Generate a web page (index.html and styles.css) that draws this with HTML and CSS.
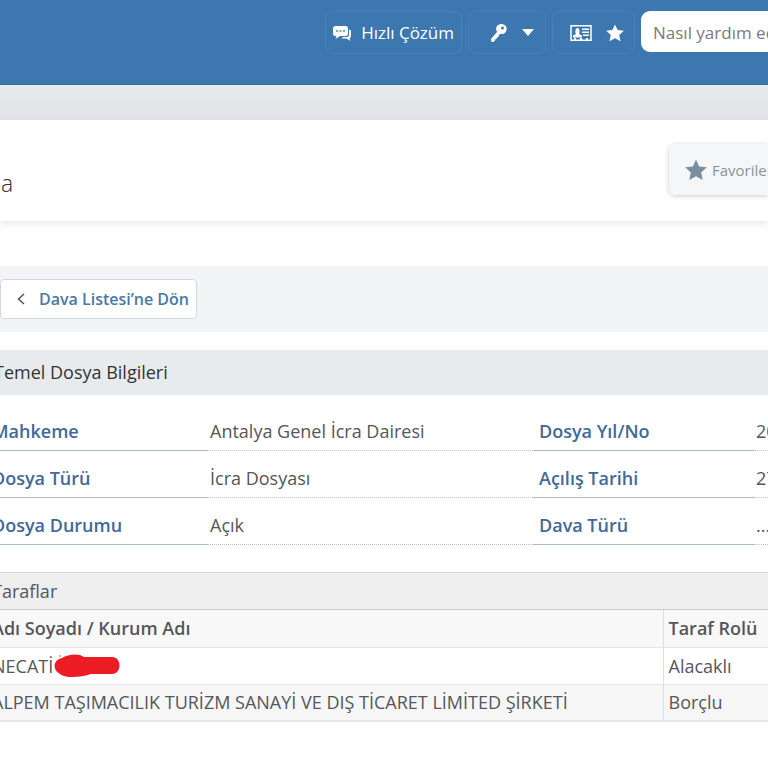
FILE: index.html
```
<!DOCTYPE html>
<html lang="tr">
<head>
    <meta charset="UTF-8">
    <meta name="viewport" content="width=device-width, initial-scale=1.0">
    <title>Dava Dosyası Sorgulama</title>
    <link rel="stylesheet" href="styles.css">
</head>
<body>
    <header class="topbar">
        <button type="button" class="top-button">
            <svg width="18" height="18" viewBox="0 0 18 18" aria-hidden="true">
                <path fill="currentColor" d="M2.500 2h10A2.500 2.500 0 0 1 15 4.500v5a2.500 2.500 0 0 1-2.500 2.500H7l-4.500 3 1-3H2.500A2.500 2.500 0 0 1 0 9.500v-5A2.500 2.500 0 0 1 2.500 2z"/>
                <path fill="currentColor" d="M16 5.500a2 2 0 0 1 2 2v4.500a2 2 0 0 1-1.500 2l1 3-4-2.500H8.500L10 13h3.500a2.500 2.500 0 0 0 2.500-2.500z"/>
                <path fill="#7fa6cc" d="M3 6h2v2H3zM6.500 6h2v2h-2zM10 6h2v2h-2z"/>
            </svg>
            <span>Hızlı Çözüm</span>
        </button>
        <button type="button" class="top-button top-key" aria-label="Şifre işlemleri">
            <svg width="18" height="20" viewBox="0 0 18 20" aria-hidden="true">
                <path fill="currentColor" fill-rule="evenodd" d="M11.500 1a5 5 0 1 1-1.200 9.800L8.500 12.500l.5 1-1.500.5-.5 1.500-1.500.5-.5 1.500L3.500 19 1 18.500V16l6-7A5 5 0 0 1 11.500 1zM12.500 3.500a1.500 1.500 0 1 0 0 3 1.500 1.500 0 0 0 0-3z"/>
            </svg>
            <svg width="12" height="8" viewBox="0 0 12 8" aria-hidden="true">
                <path fill="currentColor" d="M0 0h12L6 7z"/>
            </svg>
        </button>
        <div class="top-group">
            <button type="button" class="icon-button" aria-label="Kişisel bilgiler">
                <svg width="22" height="18" viewBox="0 0 22 18" aria-hidden="true">
                    <path fill="none" stroke="currentColor" stroke-width="1.500" d="M1 1.750h20v14.500H1z"/>
                    <path fill="currentColor" d="M3 13.500v-2l3-1.500C5 9 5 4 7.500 4S10 9 9 10l3 1.500v2zM12 4.500h7v1.500h-7zM12 7.500h7V9h-7zM13 10.500h6V12h-6zM4 14h2v2H4zM10 14h2v2h-2zM16 14h2v2h-2z"/>
                </svg>
            </button>
            <button type="button" class="icon-button" aria-label="Favoriler">
                <svg width="18" height="18" viewBox="0 0 20 20" aria-hidden="true">
                    <path fill="currentColor" d="M10 .5l2.900 6.300 6.900.8-5.100 4.700 1.400 6.800L10 15.700l-6.100 3.400 1.400-6.800L.2 7.600l6.900-.8z"/>
                </svg>
            </button>
        </div>
        <input type="text" class="search" aria-label="Arama" placeholder="Nasıl yardım edebilirim?">
    </header>
    <div class="strip"></div>

    <section class="page-head">
        <h1>a</h1>
        <button type="button" class="favorite">
            <svg width="22" height="22" viewBox="0 0 20 20" aria-hidden="true">
                <path fill="currentColor" d="M10 .5l2.900 6.300 6.900.8-5.100 4.700 1.400 6.800L10 15.700l-6.100 3.400 1.400-6.800L.2 7.600l6.900-.8z"/>
            </svg>
            <span>Favorilerime Ekle</span>
        </button>
    </section>

    <main>
        <div class="toolbar">
            <a href="#" class="back">
                <svg width="8" height="12" viewBox="0 0 8 12" aria-hidden="true">
                    <path fill="none" stroke="#4b5560" stroke-width="1.500" d="M7 1L1.500 6 7 11"/>
                </svg>
                <span>Dava Listesi’ne Dön</span>
            </a>
        </div>

        <h2 class="section-title">Temel Dosya Bilgileri</h2>
        <dl class="details">
            <dt>Mahkeme</dt>
            <dd>Antalya Genel İcra Dairesi</dd>
            <dt>Dosya Yıl/No</dt>
            <dd>20</dd>
            <dt>Dosya Türü</dt>
            <dd>İcra Dosyası</dd>
            <dt>Açılış Tarihi</dt>
            <dd>27</dd>
            <dt>Dosya Durumu</dt>
            <dd>Açık</dd>
            <dt>Dava Türü</dt>
            <dd>...</dd>
        </dl>

        <table class="parties">
            <caption>Taraflar</caption>
            <thead>
                <tr>
                    <th scope="col">Adı Soyadı / Kurum Adı</th>
                    <th scope="col" class="role">Taraf Rolü</th>
                </tr>
            </thead>
            <tbody>
                <tr>
                    <td>
                        <div class="person">
                            <span>NECATİ</span>
                            <svg width="66" height="24" viewBox="0 0 66 24" aria-hidden="true">
                                <path stroke="#77777a" d="M6 1v2"/>
                                <path fill="#ec1c24" d="M8 4C14 0 25-1 30 3h28c10 0 10 17 0 17H37c-9 3-25 5-31 0-8-4-7-14 2-16z"/>
                            </svg>
                        </div>
                    </td>
                    <td>Alacaklı</td>
                </tr>
                <tr>
                    <td>ALPEM TAŞIMACILIK TURİZM SANAYİ VE DIŞ TİCARET LİMİTED ŞİRKETİ</td>
                    <td>Borçlu</td>
                </tr>
            </tbody>
        </table>
    </main>
</body>
</html>
```
FILE: styles.css
```
* {
    box-sizing: border-box;
}
body {
    margin: 0;
    font-family: "Open Sans", "Noto Sans", sans-serif;
    font-size: 18px;
    line-height: 24px;
    color: #55565a;
    background: #fff;
    overflow-x: hidden;
}
button, input {
    font: inherit;
}
svg {
    flex: none;
}
.topbar {
    display: flex;
    justify-content: flex-end;
    gap: 6px;
    height: 85px;
    padding-top: 11px;
    font-size: 17px;
    background: #3c77b0;
    border-bottom: 1px solid #336b9f;
}
.top-button, .top-group {
    display: flex;
    align-items: center;
    height: 43px;
    color: #fff;
    background: none;
    border: 1px solid #4881b8;
    border-radius: 8px;
}
.top-button {
    gap: 10px;
    padding: 0 7px;
    white-space: nowrap;
    cursor: pointer;
}
.top-key {
    gap: 14px;
    padding: 0 11px 0 21px;
}
.top-group {
    gap: 14px;
    padding: 0 10px 0 17px;
}
.icon-button {
    display: flex;
    padding: 0;
    color: #fff;
    background: none;
    border: none;
    cursor: pointer;
}
.search {
    width: 127px;
    height: 41px;
    padding: 2px 0 0 12px;
    border: none;
    border-radius: 9px 0 0 9px;
    background: #fff;
}
.search::placeholder {
    color: #7b7b7b;
}
.strip {
    height: 35px;
    background: linear-gradient(#e7e9ed, #e1e4e7);
    border-bottom: 1px solid #dddfe1;
}
.page-head {
    display: flex;
    justify-content: space-between;
    align-items: flex-start;
    height: 101px;
    padding-top: 24px;
    box-shadow: 0 4px 6px rgba(0, 0, 0, 0.07);
}
.page-head h1 {
    margin: 23px 0 0 1px;
    font-size: 23px;
    line-height: 32px;
    font-weight: 300;
    color: #333;
}
.favorite {
    display: flex;
    align-items: center;
    gap: 5px;
    width: 99px;
    height: 51px;
    padding: 0 0 0 16px;
    overflow: hidden;
    font-size: 15px;
    white-space: nowrap;
    color: #8a939b;
    background: #f5f6f8;
    border: none;
    border-radius: 6px 0 0 6px;
    box-shadow: 0 1px 5px rgba(0, 0, 0, 0.2);
    cursor: pointer;
}
.favorite svg {
    color: #7b8fa1;
}
main {
    padding-top: 45px;
}
.toolbar {
    display: flex;
    padding: 13px 0;
    background: #f3f4f6;
}
.back {
    display: flex;
    align-items: center;
    gap: 14px;
    height: 40px;
    padding: 0 7px 0 16px;
    font-size: 16px;
    font-weight: 600;
    color: #4878a4;
    text-decoration: none;
    background: #fff;
    border: 1px solid #d3d7db;
    border-radius: 4px;
}
.section-title {
    margin: 18px 0 9px;
    padding: 10px 0 11px;
    font-size: 18px;
    font-weight: 400;
    color: #333;
    background: #e8ebee;
    text-indent: -6px;
}
.details {
    display: grid;
    grid-template-columns: 216px 1fr 221px 20px;
    margin: 0 -6px 27px -8px;
}
.details dt, .details dd {
    height: 47px;
    margin: 0;
    padding: 15px 0 0 2px;
    white-space: nowrap;
}
.details dt {
    padding-left: 6px;
    font-weight: 600;
    color: #41699a;
    border-bottom: 1px solid #a9bdd0;
}
.details dt:nth-of-type(odd) {
    padding-left: 0;
}
.details dd {
    border-bottom: 1px dotted #bcc3c9;
}
.parties {
    width: calc(100% + 8px);
    margin-left: -8px;
    border-collapse: collapse;
    border-bottom: 2px solid #e8e8ea;
}
.parties caption {
    padding: 6px 0;
    text-align: left;
    background: #eeeeef;
    border-top: 1px solid #d9d9da;
    border-bottom: 1px solid #cbcbcc;
}
.parties th, .parties td {
    height: 37px;
    padding: 0 5px;
    text-align: left;
    white-space: nowrap;
    border-bottom: 1px solid #e4e4e6;
}
.parties th {
    font-weight: 600;
    background: #f8f8f8;
}
.parties th:first-child, .parties td:first-child {
    padding-left: 0;
    border-right: 1px solid #dedee0;
}
.parties .role {
    width: 105px;
}
.parties tbody tr:nth-child(even) {
    background: #f6f6f7;
}
.person {
    display: flex;
    align-items: center;
    gap: 1px;
}
```
